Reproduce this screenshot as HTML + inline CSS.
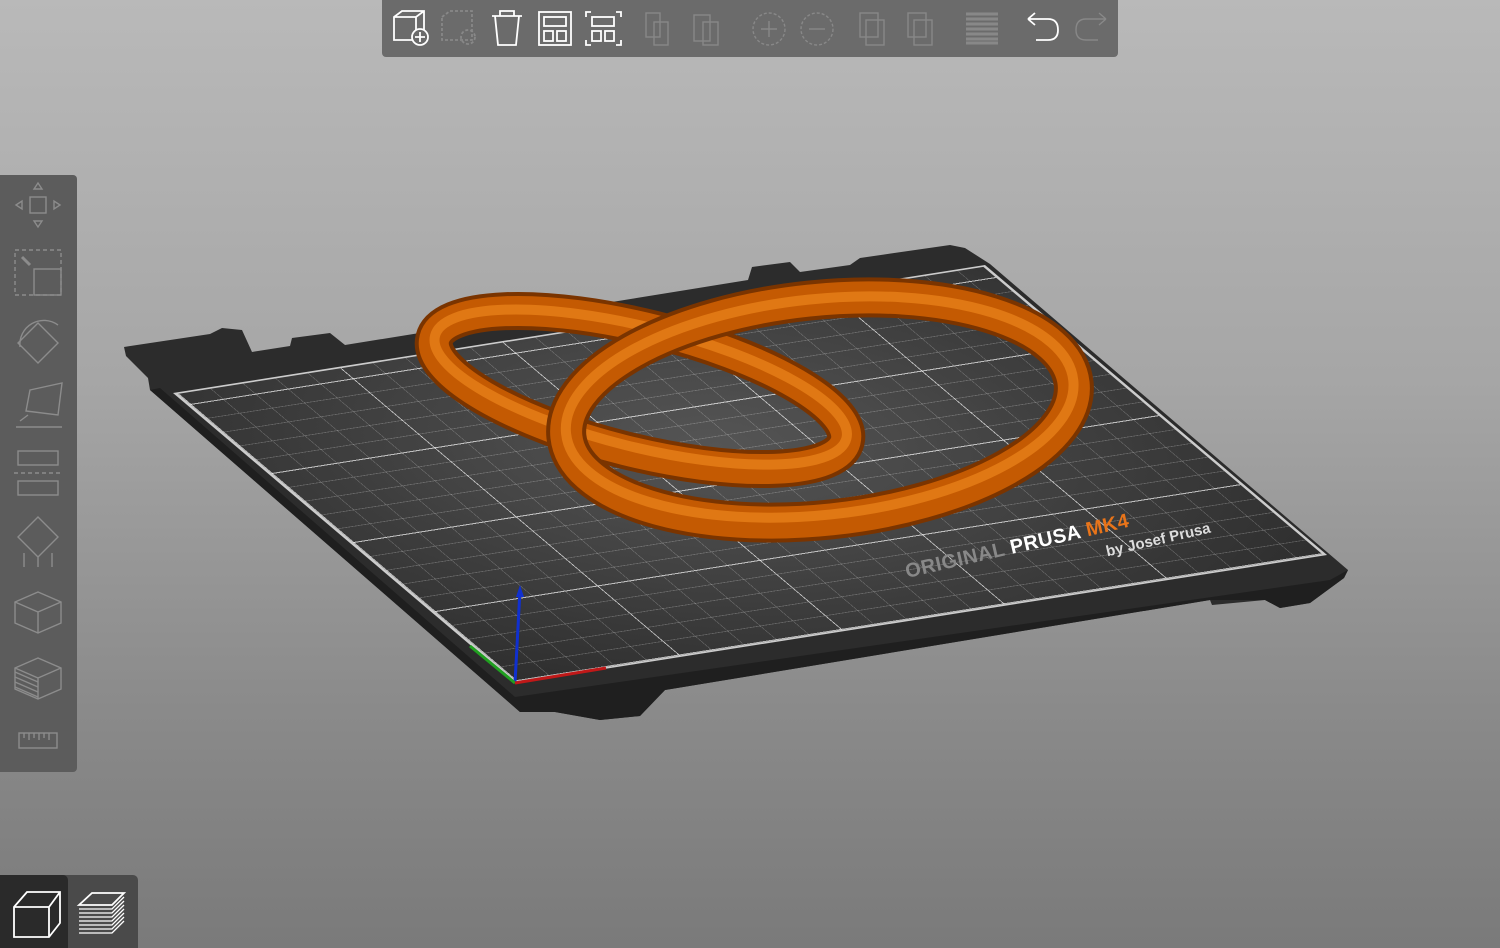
<!DOCTYPE html>
<html><head><meta charset="utf-8"><style>
html,body{margin:0;padding:0}
body{width:1500px;height:948px;overflow:hidden;position:relative;background:linear-gradient(#b9b9b9 0%,#a6a6a6 40%,#8a8a8a 75%,#7a7a7a 100%);font-family:"Liberation Sans",sans-serif}
.abs{position:absolute;left:0;top:0}
#grid{position:absolute;left:0;top:0;width:250px;height:210px;transform-origin:0 0;transform:matrix(3.248,-0.512,1.629,1.381,173,393);
background:
repeating-linear-gradient(90deg,rgba(255,255,255,.6) 0 .35px,transparent .35px 50px),
repeating-linear-gradient(0deg,rgba(255,255,255,.6) 0 .65px,transparent .65px 50px),
repeating-linear-gradient(90deg,rgba(255,255,255,.22) 0 .25px,transparent .25px 10px),
repeating-linear-gradient(0deg,rgba(255,255,255,.22) 0 .45px,transparent .45px 10px),
radial-gradient(ellipse at 50% 40%,#555,#2e2e2e);
border:0.4px solid #ccc;box-sizing:border-box}
#top{position:absolute;left:382px;top:0;width:736px;height:57px;background:#6b6b6b;border-radius:0 0 4px 4px}
#left{position:absolute;left:0;top:175px;width:77px;height:597px;background:#5c5c5c;border-radius:0 4px 4px 0}
#bl{position:absolute;left:0;top:875px;width:138px;height:73px;background:#4a4a4a;border-radius:0 5px 0 0}
#bl1{position:absolute;left:0;top:875px;width:68px;height:73px;background:#2a2a2a;border-radius:0 5px 0 0}
</style></head><body>
<svg class="abs" width="1500" height="948">
<polygon fill="#2c2c2c" points="124,347 210,334 222,328 242,330 252,352 290,346 292,338 330,333 345,345 748,280 752,267 790,262 800,272 850,265 860,258 950,245 965,248 990,264 1348,570 1344,578 1310,603 1280,608 1265,600 1212,605 1210,600 665,690 640,716 600,720 555,712 520,712 150,390 148,378 126,356"/>
<polygon fill="#1f1f1f" points="150,390 520,712 555,712 600,720 640,716 665,690 1210,600 1265,600 1280,608 1310,603 1344,578 1348,570 1330,580 515,697 160,388"/>
</svg>
<div id="grid"></div>
<svg class="abs" width="1500" height="948">
<g fill="none" stroke-linecap="round">
<g transform="rotate(14 640 390)">
<ellipse cx="640" cy="390" rx="212" ry="62" stroke="#7a3400" stroke-width="38"/>
<ellipse cx="640" cy="390" rx="212" ry="62" stroke="#c45a02" stroke-width="30"/>
<ellipse cx="640" cy="387" rx="212" ry="60" stroke="#e07814" stroke-width="10"/>
</g>
<g transform="rotate(-6 820 410)">
<ellipse cx="820" cy="410" rx="255" ry="110" stroke="#7a3400" stroke-width="40"/>
<ellipse cx="820" cy="410" rx="255" ry="110" stroke="#c45a02" stroke-width="32"/>
<ellipse cx="820" cy="407" rx="255" ry="108" stroke="#e07814" stroke-width="10"/>
</g>
</g>
<line x1="515" y1="683" x2="520" y2="590" stroke="#1030d0" stroke-width="3"/>
<polygon points="520,585 516,597 524,597" fill="#1030d0"/>
<line x1="515" y1="683" x2="470" y2="646" stroke="#20a020" stroke-width="3"/>
<line x1="515" y1="683" x2="606" y2="668" stroke="#c01818" stroke-width="3"/>
<g transform="translate(907,578) rotate(-13)">
<text x="0" y="0" font-family="Liberation Sans" font-weight="bold" font-size="20" fill="#888" letter-spacing="0.5">ORIGINAL <tspan fill="#fff">PRUSA</tspan> <tspan fill="#e8741a">MK4</tspan></text>
<text x="200" y="24" font-family="Liberation Sans" font-weight="bold" font-size="15" fill="#ddd">by Josef Prusa</text>
</g>
</svg>
<div id="top"><svg width="736" height="57" fill="none" stroke-width="1.8">
<g stroke="#fff"><path d="M12,17 L20,11 H42 V40 H12 Z M12,17 H34 L42,11 M34,17 V40"/><circle cx="38" cy="37" r="8" fill="#6b6b6b"/><path d="M38,32 V42 M33,37 H43"/></g>
<g stroke="#888" stroke-dasharray="3 2"><path d="M60,17 L68,11 H90 V40 H60 Z"/><circle cx="86" cy="37" r="7"/></g>
<g stroke="#fff"><path d="M110,16 H140 M118,16 V11 H132 V16 M113,16 L116,45 H134 L137,16"/>
<rect x="157" y="12" width="32" height="33"/><rect x="162" y="17" width="22" height="9"/><rect x="162" y="31" width="9" height="10"/><rect x="175" y="31" width="9" height="10"/>
<path d="M204,17 V12 H209 M234,12 H239 V17 M204,40 V45 H209 M234,45 H239 V40"/><rect x="210" y="17" width="22" height="9"/><rect x="210" y="31" width="9" height="10"/><rect x="223" y="31" width="9" height="10"/></g>
<g stroke="#888" stroke-width="1.4"><rect x="264" y="13" width="14" height="24"/><rect x="272" y="22" width="14" height="23"/>
<rect x="312" y="15" width="16" height="26"/><rect x="321" y="22" width="15" height="23"/>
<circle cx="387" cy="29" r="16" stroke-dasharray="3 2"/><path d="M379,29 H395 M387,21 V37"/>
<circle cx="435" cy="29" r="16" stroke-dasharray="3 2"/><path d="M427,29 H443"/>
<rect x="478" y="13" width="18" height="24"/><rect x="484" y="20" width="18" height="25"/>
<rect x="526" y="13" width="18" height="24"/><rect x="532" y="20" width="18" height="25"/>
<path d="M584,14 H616 M584,19 H616 M584,24 H616 M584,29 H616 M584,34 H616 M584,39 H616 M584,43 H616" stroke-width="3"/>
<path d="M724,19 H704 Q694,19 694,30 Q694,40 704,40 H716 M724,19 L717,13 M724,19 L717,25"/></g>
<path stroke="#fff" d="M646,19 H666 Q676,19 676,30 Q676,40 666,40 H654 M646,19 L653,13 M646,19 L653,25"/>
</svg></div>
<div id="left"><svg width="77" height="597" fill="none" stroke="#8c8c8c" stroke-width="1.4">
<rect x="30" y="22" width="16" height="16"/><path d="M38,8 L34,14 H42 Z M38,52 L34,46 H42 Z M16,30 L22,26 V34 Z M60,30 L54,26 V34 Z"/>
<rect x="15" y="75" width="46" height="45" stroke-dasharray="4 3"/><rect x="34" y="94" width="27" height="26"/><path d="M22,82 L30,90" stroke-width="3"/>
<path d="M20,172 A24,24 0 0 1 58,150"/><path d="M38,148 L58,168 L38,188 L18,168 Z"/>
<path d="M30,215 L62,208 L58,240 L26,236 Z M16,252 H62 M28,240 L20,246"/>
<rect x="18" y="276" width="40" height="14"/><rect x="18" y="306" width="40" height="14"/><path d="M14,298 H62" stroke-dasharray="4 3"/>
<path d="M38,342 L58,362 L38,382 L18,362 Z M24,378 V392 M38,382 V392 M52,378 V392"/>
<path d="M15,427 L38,417 L61,427 V448 L38,458 L15,448 Z M15,427 L38,437 L61,427 M38,437 V458"/>
<path d="M15,493 L38,483 L61,493 V514 L38,524 L15,514 Z M15,493 L38,503 L61,493 M38,503 V524"/>
<path d="M15,497 L38,507 M15,502 L38,512 M15,507 L38,517 M15,512 L38,522"/>
<rect x="19" y="558" width="38" height="15"/><path d="M24,558 V563 M29,558 V565 M34,558 V563 M39,558 V565 M44,558 V563 M49,558 V565"/>
</svg></div>
<div id="bl"></div><div id="bl1"></div>
<svg class="abs" style="top:875px" width="138" height="73" fill="none" stroke="#fff" stroke-width="1.8">
<path d="M14,32 L27,17 H60 V48 L49,62 H14 Z M14,32 H49 L60,17 M49,32 V62"/>
<path d="M79,30 L92,18 H124 L112,30 Z"/>
<path d="M79,34 H112 L124,22 M79,38 H112 L124,26 M79,42 H112 L124,30 M79,46 H112 L124,34 M79,50 H112 L124,38 M79,54 H112 L124,42 M79,58 H112 L124,46" stroke-width="1.3"/>
</svg>
</body></html>
